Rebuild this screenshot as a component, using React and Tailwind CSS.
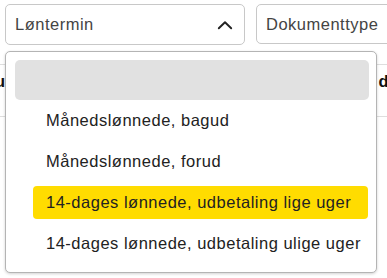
const OPTIONS = [
  "Månedslønnede, bagud",
  "Månedslønnede, forud",
  "14-dages lønnede, udbetaling lige uger",
  "14-dages lønnede, udbetaling ulige uger",
];

const ACTIVE = 2;

function ChevronUp() {
  return (
    <svg width="16" height="10" viewBox="0 0 16 10" fill="none" className="text-[#222]">
      <path d="M1.8 8.3 L8 2.2 L14.2 8.3" stroke="currentColor" strokeWidth="1.9" strokeLinecap="round" strokeLinejoin="round" />
    </svg>
  );
}

export default function App() {
  return (
    <div className="relative w-[387px] h-[278px] overflow-hidden bg-white font-['Liberation_Sans',Arial,sans-serif] text-[16.5px] tracking-[0.5px] whitespace-nowrap">
      {/* Filter selects */}
      <div className="flex gap-[11px] pt-[4px] pl-[5px]">
        <div className="w-[240px] h-[41px] shrink-0 flex items-center justify-between pl-[9px] pr-[11px] border border-[#c8c8c8] rounded-[5px] text-[#444]">
          <span>Løntermin</span>
          <ChevronUp />
        </div>
        <div className="w-[200px] h-[40px] shrink-0 flex items-center pl-[9px] border border-[#c8c8c8] rounded-[5px] text-[#444]">
          <span>Dokumenttype</span>
        </div>
      </div>

      {/* Table header behind the menu */}
      <div className="mt-[19px] h-[53px] border-y border-[#dedede] pt-[4px] flex justify-between font-bold text-[#111]">
        <span className="-ml-[5px]">u</span>
        <span className="-mr-[2px]">d</span>
      </div>

      {/* Dropdown menu */}
      <div className="absolute left-[5px] top-[51px] w-[372px] h-[222px] bg-white border border-[#b4b4b4] rounded-[5px] shadow-[0_1px_3px_rgba(0,0,0,0.18)] pt-[8px] pl-[9px] pr-[7px]">
        <div className="h-[40px] rounded-[5px] bg-[#e1e1e1]" />
        <div className="mt-[4px] flex flex-col gap-[8px] pl-[18px] pr-[1px]">
          {OPTIONS.map((o, i) => (
            <div
              key={o}
              className={
                i === ACTIVE
                  ? "h-[33px] flex items-center px-[13px] rounded-[4px] bg-[#ffdc00] text-[#222]"
                  : "h-[33px] flex items-center px-[13px] rounded-[4px] text-[#222]"
              }
            >
              {o}
            </div>
          ))}
        </div>
      </div>
    </div>
  );
}
